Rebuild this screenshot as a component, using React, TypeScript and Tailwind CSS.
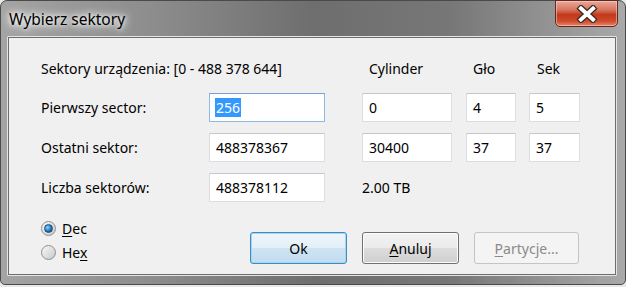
import React from 'react';

const font = { fontFamily: '"Noto Sans", "Open Sans", sans-serif' };

function Field({ value, width, focused, selected }: { value: string; width: string; focused?: boolean; selected?: boolean }) {
  return (
    <div
      className={`${width} h-[29px] flex items-center pl-[6px] bg-white border text-[14px] text-black ${
        focused ? 'border-[#8fb8e3] border-t-[#6fa3d8]' : 'border-[#dcdde2] border-t-[#c5c7cf]'
      }`}
    >
      {selected ? <span className="bg-[#3399ff] text-white leading-[19px] px-[1px] -ml-[1px]">{value}</span> : value}
    </div>
  );
}

function Radio({ checked, children }: { checked?: boolean; children: React.ReactNode }) {
  return (
    <div className="flex items-center gap-[6px] h-[24px]">
      <div className="w-[15px] h-[15px] rounded-full border border-[#8e8f8f] bg-gradient-to-br from-[#f8f8f8] to-[#c9c9c9] flex items-center justify-center">
        {checked && (
          <div className="w-[9px] h-[9px] rounded-full bg-[radial-gradient(circle_at_35%_35%,#8fd3ff,#1a6fb5_60%,#0d4e86)] border border-[#1b4c7a]" />
        )}
      </div>
      <span className="text-[14px] text-black">{children}</span>
    </div>
  );
}

function Button({ children, primary, disabled, width = 'w-[97px]' }: { children: React.ReactNode; primary?: boolean; disabled?: boolean; width?: string }) {
  const cls = disabled
    ? 'border-[#c2c5c8] bg-[#f4f4f4] text-[#8a8a8a]'
    : primary
      ? 'border-[#3c8cc6] bg-[linear-gradient(#eef6fb_0%,#e3eff8_50%,#cde4f3_50%,#c2ddef_100%)] text-black shadow-[inset_0_0_0_1px_#a9d4ee]'
      : 'border-[#707070] bg-[linear-gradient(#f2f2f2_0%,#ebebeb_50%,#dddddd_50%,#cfcfcf_100%)] text-black shadow-[inset_0_0_0_1px_#fcfcfc]';
  return (
    <div className={`${width} h-[32px] rounded-[3px] border flex items-center justify-center text-[14px] ${cls}`}>
      {children}
    </div>
  );
}

export default function App() {
  return (
    <div className="w-[626px] h-[287px] bg-[#e8e8e8] overflow-hidden" style={font}>
      <div className="relative w-[626px] h-[285px] rounded-t-[7px] rounded-b-[5px] border border-[#4a4a4a] bg-[linear-gradient(90deg,#a4a4a4_0%,#8c8c8c_25%,#6e6e6e_50%,#777777_72%,#a9a9a9_100%)] flex flex-col">
        {/* Title bar */}
        <div className="h-[35px] flex items-start pl-[8px] pt-[9px]">
          <span className="text-[15.5px] leading-[18px] text-black [text-shadow:0_0_8px_#ffffff,0_0_12px_#ffffff,0_0_4px_#ffffff]">
            Wybierz sektory
          </span>
        </div>

        {/* Close button */}
        <div className="absolute right-[7px] top-[-1px] w-[63px] h-[27px] rounded-b-[5px] border border-[#5b2b22] bg-[linear-gradient(#e9a99a_0%,#d8765f_35%,#c2381b_55%,#cf4a2c_80%,#e7866b_100%)] shadow-[inset_0_0_0_1px_rgba(255,220,210,0.5)] flex items-center justify-center">
          <svg width="22" height="18" viewBox="0 0 22 18">
            <path d="M5 3.5 L17 14.5 M17 3.5 L5 14.5" stroke="#3b2a27" strokeWidth="6.5" strokeLinecap="square" />
            <path d="M5 3.5 L17 14.5 M17 3.5 L5 14.5" stroke="#ffffff" strokeWidth="4" strokeLinecap="square" />
          </svg>
        </div>

        {/* Client area */}
        <div className="ml-[6px] mr-[8px] h-[240px] border border-[#e4e4e4] rounded-[1px]">
          <div className="h-full border border-[#6d6d6d] bg-[#f0f0f0] flex flex-col pl-[32px] pt-[20px] text-black text-[14px]">
            {/* Header */}
            <div className="flex items-center h-[20px]">
              <div className="w-[321px]">Sektory urządzenia: [0 - 488 378 644]</div>
              <div className="w-[104px] pl-[7px]">Cylinder</div>
              <div className="w-[63px] pl-[7px]">Gło</div>
              <div className="pl-[8px]">Sek</div>
            </div>

            <div className="flex flex-col gap-[11px] mt-[15px]">
              <div className="flex items-center">
                <div className="w-[168px]">Pierwszy sector:</div>
                <Field value="256" width="w-[116px]" focused selected />
                <div className="w-[37px]" />
                <Field value="0" width="w-[90px]" />
                <div className="w-[14px]" />
                <Field value="4" width="w-[50px]" />
                <div className="w-[13px]" />
                <Field value="5" width="w-[51px]" />
              </div>
              <div className="flex items-center">
                <div className="w-[168px]">Ostatni sektor:</div>
                <Field value="488378367" width="w-[116px]" />
                <div className="w-[37px]" />
                <Field value="30400" width="w-[90px]" />
                <div className="w-[14px]" />
                <Field value="37" width="w-[50px]" />
                <div className="w-[13px]" />
                <Field value="37" width="w-[51px]" />
              </div>
              <div className="flex items-center">
                <div className="w-[168px]">Liczba sektorów:</div>
                <Field value="488378112" width="w-[116px]" />
                <div className="w-[37px]" />
                <div>2.00 TB</div>
              </div>
            </div>

            {/* Bottom */}
            <div className="flex mt-[14px]">
              <div className="flex flex-col w-[209px]">
                <Radio checked>
                  <span className="underline underline-offset-2">D</span>ec
                </Radio>
                <Radio>
                  He<span className="underline underline-offset-2">x</span>
                </Radio>
              </div>
              <div className="flex gap-[15px] pt-[16px]">
                <Button primary>Ok</Button>
                <Button>
                  <span>
                    <span className="underline underline-offset-2">A</span>nuluj
                  </span>
                </Button>
                <Button disabled width="w-[105px]">
                  <span>
                    <span className="underline underline-offset-2">P</span>artycje...
                  </span>
                </Button>
              </div>
            </div>
          </div>
        </div>
      </div>
    </div>
  );
}
